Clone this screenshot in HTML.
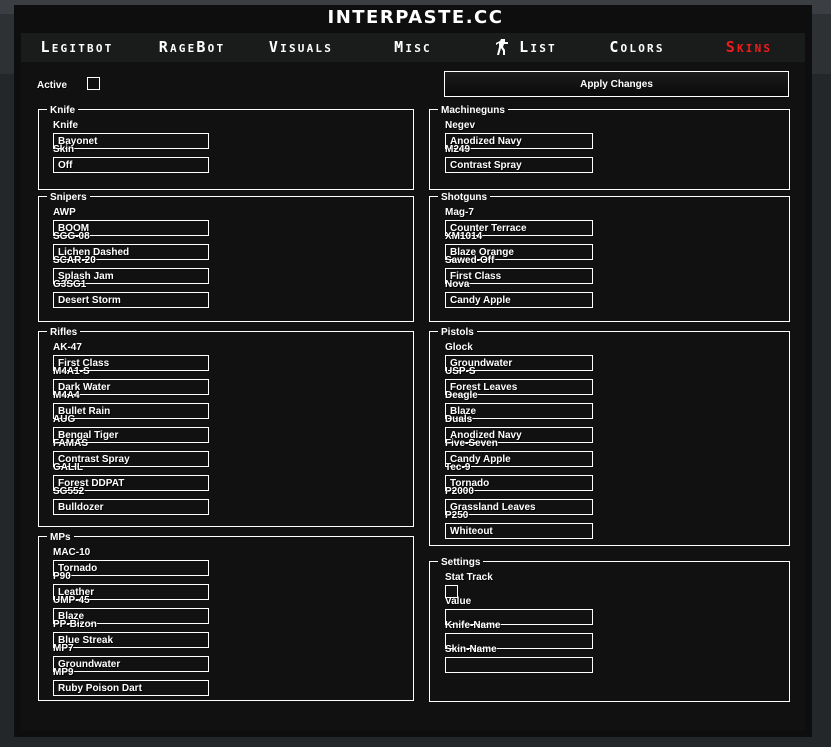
<!DOCTYPE html>
<html><head><meta charset="utf-8"><style>
*{margin:0;padding:0;box-sizing:border-box}
body{width:831px;height:747px;background:#24272a;position:relative;overflow:hidden;font-family:"Liberation Sans",sans-serif;color:#fff}
.a{position:absolute}
.t{position:absolute;font-size:10px;font-weight:bold;line-height:12px;margin-top:2px;white-space:nowrap;color:#fff;text-shadow:1px 1px 0 #000}
.b{position:absolute;border:1px solid #fff;height:16px;font-size:10px;font-weight:bold;line-height:11px;padding-top:2px;padding-left:4px;white-space:nowrap;text-shadow:1px 1px 0 #000}
.L{width:156px}.R{width:148px}
.g{position:absolute;border:1px solid #fff}
.g span{position:absolute;left:8px;top:-5px;background:#111;padding:0 3px;font-size:10px;font-weight:bold;line-height:12px}
.n{position:absolute;top:39px;font-size:15px;font-weight:bold;font-variant:small-caps;letter-spacing:2.2px;line-height:16px;transform:translateX(-50%);white-space:nowrap;font-family:"DejaVu Sans Mono","Liberation Mono",monospace}
</style></head><body>
<div class="a" style="left:0;top:0;width:831px;height:14px;background:#3b3f43"></div>
<div class="a" style="left:0;top:14px;width:831px;height:60px;background:#2e3134"></div>
<div class="a" style="left:14px;top:5px;width:798px;height:732px;background:#0e0e0e"></div>
<div class="a" style="left:21px;top:33px;width:784px;height:29px;background:#1a1b1b"></div>
<div class="a" style="left:21px;top:62px;width:784px;height:668px;background:#111"></div>
<div class="a" style="left:0;top:8px;width:831px;text-align:center;font-size:18px;font-weight:bold;letter-spacing:1.5px;line-height:20px;font-family:'DejaVu Sans',sans-serif">INTERPASTE.CC</div>
<div class="n" style="left:77px">Legitbot</div>
<div class="n" style="left:192px">RageBot</div>
<div class="n" style="left:301px">Visuals</div>
<div class="n" style="left:413px">Misc</div>
<svg class="a" style="left:495px;top:39px" width="14" height="16" viewBox="0 0 14 16"><path d="M6 0h4v3h3v2H9l-1 3 2 3v5H8v-4L6 9 4 16H2l2-8V4L1 6V4l4-2z" fill="#fff"/></svg>
<div class="n" style="left:538px">List</div>
<div class="n" style="left:637px">Colors</div>
<div class="n" style="left:749px;color:#f01c1c">Skins</div>

<div class="t" style="left:37px;top:78px">Active</div>
<div class="a" style="left:87px;top:77px;width:13px;height:13px;border:1px solid #fff"></div>
<div class="a" style="left:444px;top:71px;width:345px;height:26px;border:1px solid #fff;background:linear-gradient(#1c1c1c,#0a0a0a);font-size:10px;font-weight:bold;text-align:center;line-height:26px">Apply Changes</div>

<div class="g" style="left:38px;top:109px;width:376px;height:81px"><span>Knife</span></div>
<div class="t" style="left:53px;top:118px">Knife</div>
<div class="b L" style="left:53px;top:133px">Bayonet</div>
<div class="t" style="left:53px;top:142px">Skin</div>
<div class="b L" style="left:53px;top:157px">Off</div>

<div class="g" style="left:38px;top:196px;width:376px;height:126px"><span>Snipers</span></div>
<div class="t" style="left:53px;top:205px">AWP</div>
<div class="b L" style="left:53px;top:220px">BOOM</div>
<div class="t" style="left:53px;top:229px">SGG-08</div>
<div class="b L" style="left:53px;top:244px">Lichen Dashed</div>
<div class="t" style="left:53px;top:253px">SCAR-20</div>
<div class="b L" style="left:53px;top:268px">Splash Jam</div>
<div class="t" style="left:53px;top:277px">G3SG1</div>
<div class="b L" style="left:53px;top:292px">Desert Storm</div>

<div class="g" style="left:38px;top:331px;width:376px;height:196px"><span>Rifles</span></div>
<div class="t" style="left:53px;top:340px">AK-47</div>
<div class="b L" style="left:53px;top:355px">First Class</div>
<div class="t" style="left:53px;top:364px">M4A1-S</div>
<div class="b L" style="left:53px;top:379px">Dark Water</div>
<div class="t" style="left:53px;top:388px">M4A4</div>
<div class="b L" style="left:53px;top:403px">Bullet Rain</div>
<div class="t" style="left:53px;top:412px">AUG</div>
<div class="b L" style="left:53px;top:427px">Bengal Tiger</div>
<div class="t" style="left:53px;top:436px">FAMAS</div>
<div class="b L" style="left:53px;top:451px">Contrast Spray</div>
<div class="t" style="left:53px;top:460px">GALIL</div>
<div class="b L" style="left:53px;top:475px">Forest DDPAT</div>
<div class="t" style="left:53px;top:484px">SG552</div>
<div class="b L" style="left:53px;top:499px">Bulldozer</div>

<div class="g" style="left:38px;top:536px;width:376px;height:165px"><span>MPs</span></div>
<div class="t" style="left:53px;top:545px">MAC-10</div>
<div class="b L" style="left:53px;top:560px">Tornado</div>
<div class="t" style="left:53px;top:569px">P90</div>
<div class="b L" style="left:53px;top:584px">Leather</div>
<div class="t" style="left:53px;top:593px">UMP-45</div>
<div class="b L" style="left:53px;top:608px">Blaze</div>
<div class="t" style="left:53px;top:617px">PP-Bizon</div>
<div class="b L" style="left:53px;top:632px">Blue Streak</div>
<div class="t" style="left:53px;top:641px">MP7</div>
<div class="b L" style="left:53px;top:656px">Groundwater</div>
<div class="t" style="left:53px;top:665px">MP9</div>
<div class="b L" style="left:53px;top:680px">Ruby Poison Dart</div>

<div class="g" style="left:429px;top:109px;width:361px;height:81px"><span>Machineguns</span></div>
<div class="t" style="left:445px;top:118px">Negev</div>
<div class="b R" style="left:445px;top:133px">Anodized Navy</div>
<div class="t" style="left:445px;top:142px">M249</div>
<div class="b R" style="left:445px;top:157px">Contrast Spray</div>

<div class="g" style="left:429px;top:196px;width:361px;height:126px"><span>Shotguns</span></div>
<div class="t" style="left:445px;top:205px">Mag-7</div>
<div class="b R" style="left:445px;top:220px">Counter Terrace</div>
<div class="t" style="left:445px;top:229px">XM1014</div>
<div class="b R" style="left:445px;top:244px">Blaze Orange</div>
<div class="t" style="left:445px;top:253px">Sawed-Off</div>
<div class="b R" style="left:445px;top:268px">First Class</div>
<div class="t" style="left:445px;top:277px">Nova</div>
<div class="b R" style="left:445px;top:292px">Candy Apple</div>

<div class="g" style="left:429px;top:331px;width:361px;height:215px"><span>Pistols</span></div>
<div class="t" style="left:445px;top:340px">Glock</div>
<div class="b R" style="left:445px;top:355px">Groundwater</div>
<div class="t" style="left:445px;top:364px">USP-S</div>
<div class="b R" style="left:445px;top:379px">Forest Leaves</div>
<div class="t" style="left:445px;top:388px">Deagle</div>
<div class="b R" style="left:445px;top:403px">Blaze</div>
<div class="t" style="left:445px;top:412px">Duals</div>
<div class="b R" style="left:445px;top:427px">Anodized Navy</div>
<div class="t" style="left:445px;top:436px">Five-Seven</div>
<div class="b R" style="left:445px;top:451px">Candy Apple</div>
<div class="t" style="left:445px;top:460px">Tec-9</div>
<div class="b R" style="left:445px;top:475px">Tornado</div>
<div class="t" style="left:445px;top:484px">P2000</div>
<div class="b R" style="left:445px;top:499px">Grassland Leaves</div>
<div class="t" style="left:445px;top:508px">P250</div>
<div class="b R" style="left:445px;top:523px">Whiteout</div>

<div class="g" style="left:429px;top:561px;width:361px;height:141px"><span>Settings</span></div>
<div class="t" style="left:445px;top:570px">Stat Track</div>
<div class="a" style="left:445px;top:585px;width:13px;height:13px;border:1px solid #fff"></div>
<div class="t" style="left:445px;top:594px">Value</div>
<div class="b R" style="left:445px;top:609px"></div>
<div class="t" style="left:445px;top:618px">Knife-Name</div>
<div class="b R" style="left:445px;top:633px"></div>
<div class="t" style="left:445px;top:642px">Skin-Name</div>
<div class="b R" style="left:445px;top:657px"></div>
</body></html>
